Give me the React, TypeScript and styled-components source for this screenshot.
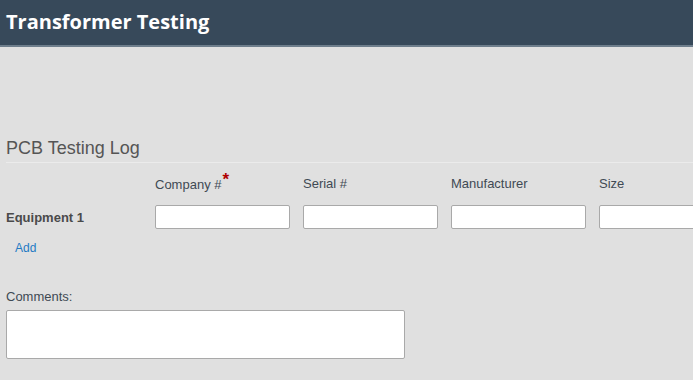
import React from "react";
import styled, { createGlobalStyle } from "styled-components";

const GlobalStyle = createGlobalStyle`
    html, body {
        margin: 0;
        padding: 0;
        background-color: #e0e0e0;
        overflow: hidden;
    }
    body {
        font-family: "Liberation Sans", Arial, sans-serif;
    }
`;

const Header = styled.header`
    height: 45px;
    background-color: #37495a;
    border-bottom: 2px solid #6e7e8c;
    display: flex;
    align-items: center;
    padding: 0 6px 3px;
    box-sizing: border-box;
    height: 47px;
`;

const Title = styled.h1`
    margin: 0;
    color: #ffffff;
    font-family: "Open Sans", sans-serif;
    font-weight: 700;
    font-size: 20px;
`;

const Main = styled.main`
    padding: 0 6px;
    width: 800px;
`;

const SectionTitle = styled.h2`
    margin: 90px 0 0;
    padding-bottom: 3px;
    font-weight: 400;
    font-size: 18px;
    line-height: 22px;
    color: #555555;
    border-bottom: 1px solid #ebebeb;
`;

const Grid = styled.div`
    display: grid;
    grid-template-columns: 136px repeat(4, 135px);
    column-gap: 13px;
    row-gap: 6px;
    align-items: center;
    margin-top: 12px;
`;

const ColLabel = styled.div`
    font-size: 13px;
    line-height: 18px;
    color: #3f4a54;
    height: 24px;
`;

const Required = styled.span`
    color: #b00000;
    font-size: 17px;
    font-weight: 700;
    position: relative;
    top: -4px;
    margin-left: 1px;
`;

const RowLabel = styled.div`
    font-size: 13px;
    font-weight: 700;
    color: #4a4a4a;
`;

const TextInput = styled.input`
    box-sizing: border-box;
    width: 135px;
    height: 24px;
    margin: 0;
    background: #ffffff;
    border: 1px solid #a9a9a9;
    border-radius: 2px;
`;

const AddLink = styled.a`
    display: inline-block;
    margin: 12px 0 0 9px;
    font-size: 12px;
    color: #1f7ac4;
    text-decoration: none;
`;

const FieldLabel = styled.label`
    display: block;
    margin-top: 33px;
    font-size: 13px;
    color: #3f4a54;
`;

const CommentBox = styled.textarea`
    display: block;
    box-sizing: border-box;
    width: 399px;
    height: 49px;
    margin-top: 6px;
    background: #ffffff;
    border: 1px solid #a9a9a9;
    border-radius: 2px;
    resize: none;
`;

const columns = ["Company #", "Serial #", "Manufacturer", "Size"];

const App: React.FC = () => (
    <>
        <GlobalStyle />
        <Header>
            <Title>Transformer Testing</Title>
        </Header>
        <Main>
            <SectionTitle>PCB Testing Log</SectionTitle>
            <Grid>
                <div />
                {columns.map((col, i) => (
                    <ColLabel key={col}>
                        {col}
                        {i === 0 && <Required>*</Required>}
                    </ColLabel>
                ))}
                <RowLabel>Equipment 1</RowLabel>
                {columns.map((col) => (
                    <TextInput key={col} type="text" />
                ))}
            </Grid>
            <AddLink href="#">Add</AddLink>
            <FieldLabel>Comments:</FieldLabel>
            <CommentBox />
        </Main>
    </>
);

export default App;
